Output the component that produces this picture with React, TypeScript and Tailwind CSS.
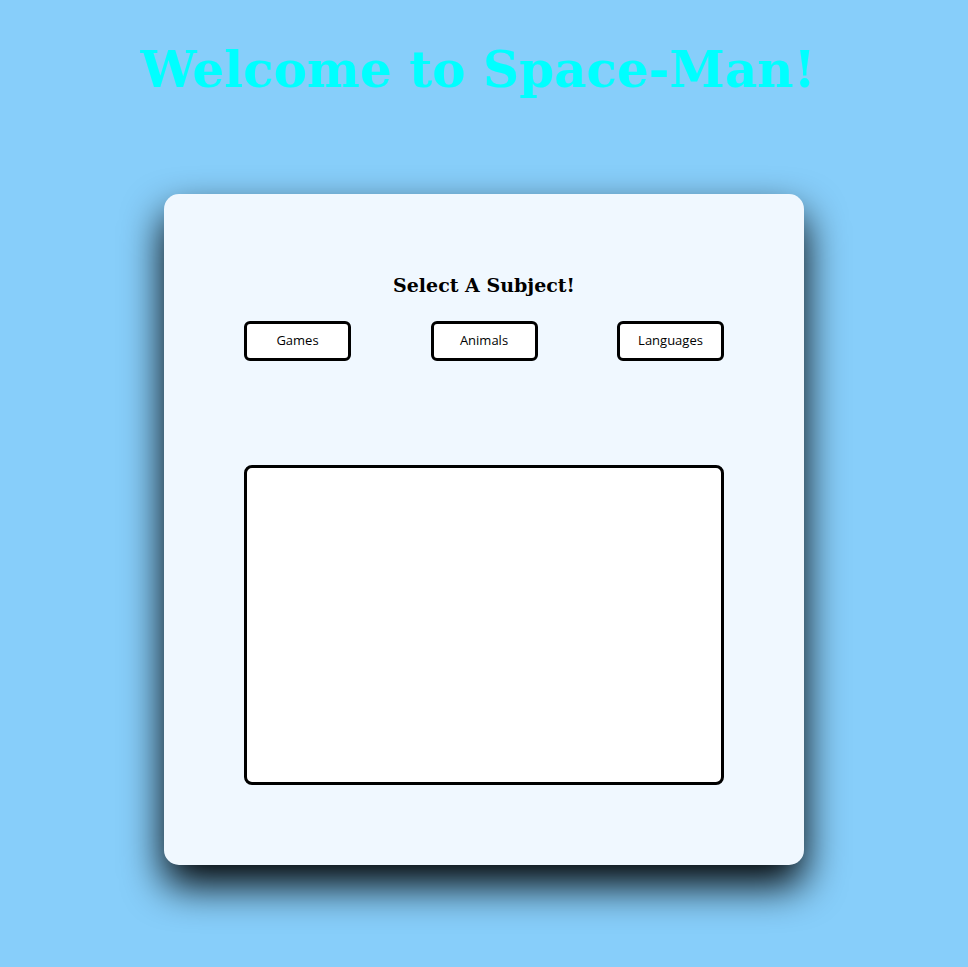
export default function App() {
  const serif = { fontFamily: '"DejaVu Serif", serif' };
  return (
    <div className="min-h-[967px] w-full bg-[#87cefa] flex flex-col items-center">
      <h1
        className="mt-[38px] mr-[12px] h-[64px] leading-[64px] text-[50px] font-bold text-[#00ffff] text-center"
        style={serif}
      >
        Welcome to Space-Man!
      </h1>
      <div className="mt-[92px] w-[640px] h-[671px] bg-[#f0f8ff] rounded-[15px] shadow-[0_20px_40px_0_#000] flex flex-col items-center pt-[79px]">
        <h2 className="text-[19px] font-bold text-black leading-[24px]" style={serif}>
          Select A Subject!
        </h2>
        <div className="mt-[24px] w-[480px] flex justify-between">
          {["Games", "Animals", "Languages"].map((t) => (
            <button
              key={t}
              className="w-[107px] h-[40px] bg-white border-[3px] border-black rounded-[6px] text-[13px] text-black"
              style={{ fontFamily: '"Open Sans", "DejaVu Sans", sans-serif' }}
            >
              {t}
            </button>
          ))}
        </div>
        <div className="mt-[104px] w-[480px] h-[320px] bg-white border-[3px] border-black rounded-[8px]" />
      </div>
    </div>
  );
}
